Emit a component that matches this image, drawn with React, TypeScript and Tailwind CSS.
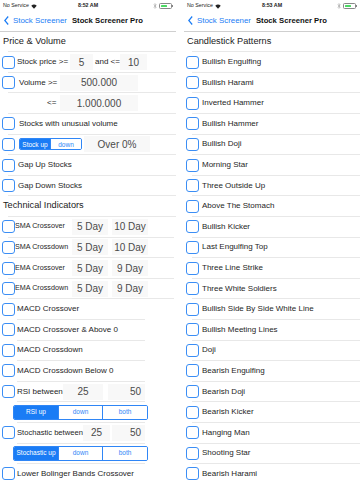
import React from "react";

const font = { fontFamily: '"Liberation Sans", Arial, sans-serif' };

function Box({ w, children, cls = "" }: { w: string; children?: React.ReactNode; cls?: string }) {
  return (
    <div className={`flex h-[16px] shrink-0 items-center justify-center bg-[#f8f8f8] text-[10px] text-[#4a4a4a] ${w} ${cls}`}>
      {children}
    </div>
  );
}

function Check() {
  return <div className="ml-[2px] h-[13px] w-[13px] shrink-0 rounded-[3px] border-[1.5px] border-[#3b8ef5] bg-white" />;
}

function Row({ children, sep = "ml-[8px] mr-0" }: { children?: React.ReactNode; sep?: string }) {
  return (
    <div className="flex h-[20.6px] shrink-0 flex-col">
      <div className="flex h-[19.6px] items-center">{children}</div>
      <div className={`h-px bg-[#e8e8e8] ${sep}`} />
    </div>
  );
}

function Header({ title }: { title: string }) {
  return (
    <Row>
      <span className="pl-[3px] text-[9.2px] text-[#1a1a1a]">{title}</span>
    </Row>
  );
}

function Label({ children, cls = "" }: { children: React.ReactNode; cls?: string }) {
  return <span className={`shrink-0 whitespace-nowrap text-[8px] text-[#1e1e1e] ${cls}`}>{children}</span>;
}

function Seg({ items, widths, cls = "" }: { items: string[]; widths: string[]; cls?: string }) {
  return (
    <div className={`flex shrink-0 overflow-hidden rounded-[2px] border border-[#2f86f6] ${cls}`}>
      {items.map((it, i) => (
        <div
          key={it}
          className={`flex h-full items-center justify-center text-[6.5px] ${widths[i]} ${
            i === 0 ? "bg-[#1a7cf5] text-white" : "border-l border-[#2f86f6] bg-white text-[#2f86f6]"
          }`}
        >
          {it}
        </div>
      ))}
    </div>
  );
}

function StatusBar({ time }: { time: string }) {
  return (
    <div className="flex h-[11px] shrink-0 items-center justify-between px-[3px] pt-px text-[5.3px] text-[#222]">
      <div className="flex w-[50px] items-center gap-[2px]">
        <span>No Service</span>
        <svg width="6" height="5" viewBox="0 0 12 9">
          <path d="M6 9 L0.5 3 A8 8 0 0 1 11.5 3 Z" fill="#222" />
        </svg>
      </div>
      <span className="font-bold">{time}</span>
      <div className="flex w-[50px] items-center justify-end gap-[2px]">
        <svg width="4" height="6" viewBox="0 0 6 10">
          <path d="M1 2.5 L5 7 L3 9 V1 L5 3 L1 7.5" stroke="#999" strokeWidth="0.9" fill="none" />
        </svg>
        <div className="flex items-center">
          <div className="flex h-[6px] w-[13px] items-center rounded-[1.5px] border-[0.8px] border-[#888] p-[0.7px]">
            <div className="h-full w-[6px] rounded-[0.5px] bg-[#4cd964]" />
          </div>
          <div className="h-[2.5px] w-[1px] bg-[#888]" />
        </div>
      </div>
    </div>
  );
}

function NavBar() {
  return (
    <div className="flex h-[20.7px] shrink-0 flex-col">
      <div className="flex h-[19.9px] items-center">
        <svg className="ml-[4px]" width="5" height="9" viewBox="0 0 5 9">
          <path d="M4.2 0.5 L0.8 4.5 L4.2 8.5" stroke="#1a7cf5" strokeWidth="1.2" fill="none" />
        </svg>
        <span className="ml-[4px] text-[7.9px] text-[#1a7cf5]">Stock Screener</span>
        <span className="ml-[5px] text-[7.7px] font-bold text-[#111]">Stock Screener Pro</span>
      </div>
      <div className="h-[0.8px] bg-[#cfcfcf]" />
    </div>
  );
}

function LeftPanel() {
  const macd = "ml-[17px] mr-[31px]";
  return (
    <div className="flex w-[176px] shrink-0 flex-col bg-white">
      <StatusBar time="8:52 AM" />
      <NavBar />
      <Header title="Price & Volume" />
      <Row>
        <Check />
        <Label cls="ml-[2px] w-[53px]">Stock price &gt;=</Label>
        <Box w="w-[23px]">5</Box>
        <Label cls="w-[27px] pl-[2px]">and &lt;=</Label>
        <Box w="w-[27px]">10</Box>
      </Row>
      <Row>
        <Check />
        <Label cls="ml-[4px] w-[41px]">Volume &gt;=</Label>
        <Box w="w-[78px]">500.000</Box>
      </Row>
      <Row>
        <div className="w-[47px] shrink-0" />
        <Label cls="w-[13px]">&lt;=</Label>
        <Box w="w-[78px]">1.000.000</Box>
      </Row>
      <Row>
        <Check />
        <Label cls="ml-[4px]">Stocks with unusual volume</Label>
      </Row>
      <Row>
        <Check />
        <Seg items={["Stock up", "down"]} widths={["w-[30px]", "w-[31px]"]} cls="ml-[4px] h-[12px]" />
        <Box w="w-[66px]" cls="ml-[2px] text-[10.7px]">Over 0%</Box>
      </Row>
      <Row>
        <Check />
        <Label cls="ml-[3px]">Gap Up Stocks</Label>
      </Row>
      <Row>
        <Check />
        <Label cls="ml-[3px]">Gap Down Stocks</Label>
      </Row>
      <Header title="Technical Indicators" />
      {[
        ["SMA Crossover", "5 Day", "10 Day"],
        ["SMA Crossdown", "5 Day", "10 Day"],
        ["EMA Crossover", "5 Day", "9 Day"],
        ["EMA Crossdown", "5 Day", "9 Day"],
      ].map(([l, a, b]) => (
        <Row key={l} sep="ml-[8px] mr-[2px]">
          <Check />
          <span className="w-[57px] shrink-0 whitespace-nowrap text-[7.2px] text-[#1e1e1e]">{l}</span>
          <Box w="w-[36px]">{a}</Box>
          <Box w="w-[36px]" cls="ml-[4px]">{b}</Box>
        </Row>
      ))}
      {["MACD Crossover", "MACD Crossover & Above 0", "MACD Crossdown", "MACD Crossdown Below 0"].map((l) => (
        <Row key={l} sep={macd}>
          <Check />
          <Label cls="ml-[2px]">{l}</Label>
        </Row>
      ))}
      <Row sep={macd}>
        <Check />
        <Label cls="ml-[2px] w-[46px]">RSI between</Label>
        <Box w="w-[40px]">25</Box>
        <Box w="w-[37px]" cls="ml-[5px] justify-end pr-[4px]">50</Box>
      </Row>
      <Row sep={macd}>
        <Seg items={["RSI up", "down", "both"]} widths={["w-[44px]", "w-[44px]", "w-[45px]"]} cls="ml-[13px] h-[15px]" />
      </Row>
      <Row sep={macd}>
        <Check />
        <span className="ml-[2px] w-[66px] shrink-0 whitespace-nowrap text-[7.6px] text-[#1e1e1e]">Stochastic between</span>
        <Box w="w-[27px]">25</Box>
        <Box w="w-[33px]" cls="ml-[2px] justify-end pr-[4px]">50</Box>
      </Row>
      <Row sep={macd}>
        <Seg
          items={["Stochastic up", "down", "both"]}
          widths={["w-[44px]", "w-[44px]", "w-[45px]"]}
          cls="ml-[13px] h-[15px]"
        />
      </Row>
      <Row sep={macd}>
        <Check />
        <Label cls="ml-[2px]">Lower Bolinger Bands Crossover</Label>
      </Row>
    </div>
  );
}

const patterns = [
  "Bullish Engulfing",
  "Bullish Harami",
  "Inverted Hammer",
  "Bullish Hammer",
  "Bullish Doji",
  "Morning Star",
  "Three Outside Up",
  "Above The Stomach",
  "Bullish Kicker",
  "Last Engulfing Top",
  "Three Line Strike",
  "Three White Soldiers",
  "Bullish Side By Side White Line",
  "Bullish Meeting Lines",
  "Doji",
  "Bearish Engulfing",
  "Bearish Doji",
  "Bearish Kicker",
  "Hanging Man",
  "Shooting Star",
  "Bearish Harami",
];

function RightPanel() {
  return (
    <div className="flex w-[176px] shrink-0 flex-col bg-white">
      <StatusBar time="8:53 AM" />
      <NavBar />
      <Header title="Candlestick Patterns" />
      {patterns.map((p) => (
        <Row key={p}>
          <Check />
          <Label cls="ml-[3px]">{p}</Label>
        </Row>
      ))}
    </div>
  );
}

export default function App() {
  return (
    <div className="flex h-[480px] w-[360px] overflow-hidden bg-white" style={font}>
      <LeftPanel />
      <div className="w-[8px] shrink-0 bg-white" />
      <RightPanel />
    </div>
  );
}
